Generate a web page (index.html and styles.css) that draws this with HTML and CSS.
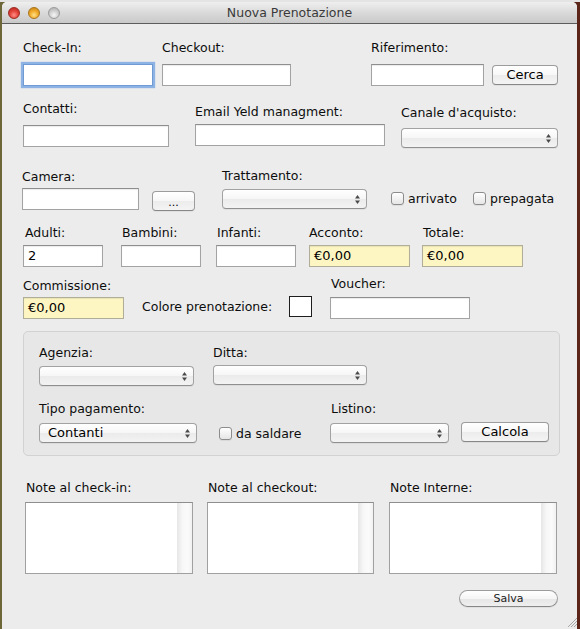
FILE: index.html
```html
<!DOCTYPE html>
<html lang="it">
<head>
<meta charset="utf-8">
<title>Nuova Prenotazione</title>
<link rel="stylesheet" href="styles.css">
</head>
<body>
<div class="window">
  <div class="titlebar">
    <div class="lights">
      <span class="light red"></span>
      <span class="light yellow"></span>
      <span class="light grey"></span>
    </div>
    <div class="title">Nuova Prenotazione</div>
    <div></div>
  </div>

  <div class="content">
    <div class="row r1">
      <div class="f f-checkin"><div class="lbl">Check-In:</div><div class="tf focus h22 mt9"></div></div>
      <div class="f f-checkout"><div class="lbl">Checkout:</div><div class="tf h22 mt9"></div></div>
      <div class="f f-rif">
        <div class="lbl">Riferimento:</div>
        <div class="inline mt9">
          <div class="tf h22 w-rif"></div>
          <div class="btn b-cerca">Cerca</div>
        </div>
      </div>
    </div>

    <div class="row r2">
      <div class="f f-contatti"><div class="lbl">Contatti:</div><div class="tf h22 mt9"></div></div>
      <div class="f f-email"><div class="lbl mt3">Email Yeld managment:</div><div class="tf h22 mt5"></div></div>
      <div class="f f-canale"><div class="lbl mt4">Canale d'acquisto:</div><div class="sel mt8"><span class="sel-text"></span><svg class="arrows" viewBox="0 0 5 9" width="5" height="9"><polygon points="2.5,0 5,3.5 0,3.5"/><polygon points="0,5.5 5,5.5 2.5,9"/></svg></div></div>
    </div>

    <div class="row r3">
      <div class="f f-camera"><div class="lbl mt1">Camera:</div><div class="tf h22 mt4"></div></div>
      <div class="btn b-dots">...</div>
      <div class="f f-tratt"><div class="lbl">Trattamento:</div><div class="sel mt6"><span class="sel-text"></span><svg class="arrows" viewBox="0 0 5 9" width="5" height="9"><polygon points="2.5,0 5,3.5 0,3.5"/><polygon points="0,5.5 5,5.5 2.5,9"/></svg></div></div>
      <div class="chk c-arrivato"><span class="box"></span><span>arrivato</span></div>
      <div class="chk c-prepagata"><span class="box"></span><span>prepagata</span></div>
    </div>

    <div class="row r4">
      <div class="f f-adulti"><div class="lbl pl2">Adulti:</div><div class="tf h22 mt5 val">2</div></div>
      <div class="f f-bambini"><div class="lbl pl1">Bambini:</div><div class="tf h22 mt5"></div></div>
      <div class="f f-infanti"><div class="lbl pl1">Infanti:</div><div class="tf h22 mt5"></div></div>
      <div class="f f-acconto"><div class="lbl">Acconto:</div><div class="tf yellow h22 mt5 val">€0,00</div></div>
      <div class="f f-totale"><div class="lbl pl1">Totale:</div><div class="tf yellow h22 mt5 val">€0,00</div></div>
    </div>

    <div class="row r5">
      <div class="f f-comm"><div class="lbl mt2">Commissione:</div><div class="tf yellow h22 mt4 val">€0,00</div></div>
      <div class="colore"><span class="colore-text">Colore prenotazione:</span><span class="swatch"></span></div>
      <div class="f f-voucher"><div class="lbl pl1">Voucher:</div><div class="tf h22 mt6"></div></div>
    </div>

    <div class="group">
      <div class="row g1">
        <div class="f f-agenzia"><div class="lbl">Agenzia:</div><div class="sel mt6"><span class="sel-text"></span><svg class="arrows" viewBox="0 0 5 9" width="5" height="9"><polygon points="2.5,0 5,3.5 0,3.5"/><polygon points="0,5.5 5,5.5 2.5,9"/></svg></div></div>
        <div class="f f-ditta"><div class="lbl">Ditta:</div><div class="sel mt5"><span class="sel-text"></span><svg class="arrows" viewBox="0 0 5 9" width="5" height="9"><polygon points="2.5,0 5,3.5 0,3.5"/><polygon points="0,5.5 5,5.5 2.5,9"/></svg></div></div>
      </div>
      <div class="row g2">
        <div class="f f-tipo"><div class="lbl">Tipo pagamento:</div><div class="sel mt7"><span class="sel-text">Contanti</span><svg class="arrows" viewBox="0 0 5 9" width="5" height="9"><polygon points="2.5,0 5,3.5 0,3.5"/><polygon points="0,5.5 5,5.5 2.5,9"/></svg></div></div>
        <div class="chk c-saldare"><span class="box"></span><span>da saldare</span></div>
        <div class="f f-listino"><div class="lbl pl1">Listino:</div><div class="sel mt7"><span class="sel-text"></span><svg class="arrows" viewBox="0 0 5 9" width="5" height="9"><polygon points="2.5,0 5,3.5 0,3.5"/><polygon points="0,5.5 5,5.5 2.5,9"/></svg></div></div>
        <div class="btn b-calcola">Calcola</div>
      </div>
    </div>

    <div class="row notes">
      <div class="f f-n1"><div class="lbl pl1">Note al check-in:</div><div class="ta mt7"><div class="scroll"></div></div></div>
      <div class="f f-n2"><div class="lbl pl1">Note al checkout:</div><div class="ta mt7"><div class="scroll"></div></div></div>
      <div class="f f-n3"><div class="lbl pl1">Note Interne:</div><div class="ta mt7"><div class="scroll"></div></div></div>
    </div>

    <div class="row footer">
      <div class="btn b-salva">Salva</div>
    </div>
  </div>

  <svg class="grip" viewBox="0 0 12 12" width="12" height="12">
    <line x1="3" y1="12" x2="12" y2="3" stroke="#a8a8a8" stroke-width="1"/>
    <line x1="6" y1="12" x2="12" y2="6" stroke="#a8a8a8" stroke-width="1"/>
    <line x1="9" y1="12" x2="12" y2="9" stroke="#a8a8a8" stroke-width="1"/>
  </svg>
</div>
</body>
</html>
```

FILE: styles.css
```css
html, body {
  margin: 0;
  padding: 0;
}
body {
  width: 580px;
  height: 629px;
  overflow: hidden;
  background:
    linear-gradient(#e4e4e4, #e4e4e4) top left / 100% 2px no-repeat,
    linear-gradient(to right, #6c6638 0, #6c6638 50%, #5b2519 50%, #5b2519 100%);
  font-family: "DejaVu Sans", "Liberation Sans", sans-serif;
  font-size: 12.5px;
  color: #0d0d0d;
}

.window {
  margin: 2px 0 0 2px;
  width: 575px;
  height: 627px;
  background: #ececec;
  position: relative;
  border-radius: 5px 5px 0 0;
  overflow: hidden;
}

.titlebar {
  height: 21px;
  border-bottom: 1px solid #5c5c5c;
  background: linear-gradient(#efefef, #dadada 50%, #c9c9c9);
  display: grid;
  grid-template-columns: 1fr auto 1fr;
  align-items: center;
}
.lights {
  display: flex;
  gap: 8px;
  padding-left: 6px;
}
.light {
  width: 12px;
  height: 12px;
  border-radius: 50%;
  box-sizing: border-box;
}
.light.red {
  background: radial-gradient(circle at 50% 70%, #ff8f86 0, #e5463c 45%, #b0201a 100%);
  border: 1px solid #9c2a22;
}
.light.yellow {
  background: radial-gradient(circle at 50% 70%, #ffe08a 0, #f2ad2c 45%, #c27d10 100%);
  border: 1px solid #a8741a;
}
.light.grey {
  background: radial-gradient(circle at 50% 70%, #f6f6f6 0, #d2d2d2 45%, #a9a9a9 100%);
  border: 1px solid #9a9a9a;
}
.title {
  color: #3a3a3a;
  font-size: 12.5px;
  line-height: 21px;
}

.row {
  display: flex;
  align-items: flex-start;
}
.f {
  display: flex;
  flex-direction: column;
  flex: none;
}
.lbl {
  height: 16px;
  line-height: 17px;
  white-space: nowrap;
}
.inline {
  display: flex;
  align-items: flex-start;
}

.mt1 { margin-top: 1px; }
.mt2 { margin-top: 2px; }
.mt3 { margin-top: 3px; }
.mt4 { margin-top: 4px; }
.mt5 { margin-top: 5px; }
.mt6 { margin-top: 6px; }
.mt7 { margin-top: 7px; }
.mt8 { margin-top: 8px; }
.mt9 { margin-top: 9px; }
.pl1 { padding-left: 1px; }
.pl2 { padding-left: 2px; }

/* text fields */
.tf {
  box-sizing: border-box;
  background: #fff;
  border: 1px solid #a3a3a3;
  border-top-color: #8e8e8e;
  box-shadow: inset 0 1px 1px rgba(0,0,0,0.08);
  width: 100%;
}
.h22 { height: 22px; }
.tf.val {
  padding-left: 4px;
  line-height: 20px;
  font-size: 13px;
  color: #000;
}
.tf.yellow {
  background: #fdf6c3;
  border-color: #b0ad98;
}
.tf.focus {
  border-color: #6f9ad4;
  box-shadow: 0 0 1px 2px rgba(110,160,225,0.75);
}

/* popup buttons */
.sel {
  box-sizing: border-box;
  height: 20px;
  width: 100%;
  border: 1px solid #a2a2a2;
  border-bottom-color: #8f8f8f;
  border-radius: 4px;
  background: linear-gradient(#ffffff, #f6f6f6 50%, #ebebeb 51%, #f3f3f3);
  box-shadow: 0 1px 0 rgba(0,0,0,0.05);
  display: flex;
  align-items: center;
  justify-content: space-between;
  padding: 0 6px 0 8px;
}
.sel-text {
  font-size: 13px;
  color: #000;
  line-height: 18px;
}
.arrows {
  fill: #4a4a4a;
}

/* push buttons */
.btn {
  box-sizing: border-box;
  flex: none;
  height: 20px;
  border: 1px solid #9c9c9c;
  border-bottom-color: #878787;
  border-radius: 4px;
  background: linear-gradient(#ffffff, #f7f7f7 50%, #ececec 51%, #f4f4f4);
  box-shadow: 0 1px 0 rgba(0,0,0,0.05);
  display: flex;
  align-items: center;
  justify-content: center;
  font-size: 13px;
  color: #000;
  line-height: 18px;
}

/* checkboxes */
.chk {
  flex: none;
  display: flex;
  align-items: center;
  gap: 4px;
  height: 16px;
  white-space: nowrap;
  font-size: 12.5px;
}
.box {
  width: 13px;
  height: 13px;
  box-sizing: border-box;
  border: 1px solid #8c8c8c;
  border-radius: 3px;
  background: linear-gradient(#ffffff, #f2f2f2 50%, #e6e6e6);
  box-shadow: 0 1px 0 rgba(0,0,0,0.06);
}

/* row 1 */
.r1 { margin-top: 15px; }
.f-checkin { margin-left: 21px; width: 130px; }
.f-checkout { margin-left: 9px; width: 129px; }
.f-rif { margin-left: 80px; }
.w-rif { width: 113px; }
.b-cerca { margin-left: 8px; margin-top: 1px; width: 66px; }

/* row 2 */
.r2 { margin-top: 14px; }
.f-contatti { margin-left: 21px; width: 146px; }
.f-email { margin-left: 26px; width: 190px; }
.f-canale { margin-left: 16px; width: 157px; }

/* row 3 */
.r3 { margin-top: 19px; }
.f-camera { margin-left: 20px; width: 117px; }
.b-dots { margin-left: 13px; margin-top: 24px; width: 43px; font-size: 11px; padding-top: 3px; }
.f-tratt { margin-left: 27px; width: 145px; }
.c-arrivato { margin-left: 24px; margin-top: 23px; width: 82px; }
.c-prepagata { margin-top: 23px; }

/* row 4 */
.r4 { margin-top: 13px; }
.f-adulti { margin-left: 21px; width: 80px; }
.f-bambini { margin-left: 18px; width: 80px; }
.f-infanti { margin-left: 15px; width: 80px; }
.f-acconto { margin-left: 13px; width: 101px; }
.f-totale { margin-left: 12px; width: 101px; }

/* row 5 */
.r5 { margin-top: 8px; }
.f-comm { margin-left: 21px; width: 101px; }
.colore {
  flex: none;
  margin-left: 18px;
  margin-top: 21px;
  display: flex;
  align-items: center;
  font-size: 12.5px;
}
.colore-text {
  width: 133px;
  white-space: nowrap;
}
.swatch {
  margin-left: 14px;
  width: 23px;
  height: 21px;
  box-sizing: border-box;
  border: 1px solid #1e1e1e;
  background: #fff;
}
.f-voucher { margin-left: 18px; width: 140px; }

/* group box */
.group {
  box-sizing: border-box;
  margin: 12px 0 0 21px;
  width: 537px;
  height: 125px;
  border: 1px solid #d2d2d2;
  border-radius: 5px;
  background: #e7e7e7;
  padding-top: 12px;
}
.f-agenzia { margin-left: 15px; width: 155px; }
.f-ditta { margin-left: 19px; width: 154px; }
.g2 { margin-top: 14px; }
.f-tipo { margin-left: 15px; width: 158px; }
.c-saldare { margin-left: 22px; margin-top: 25px; width: 111px; }
.f-listino { width: 119px; }
.b-calcola { margin-left: 12px; margin-top: 22px; width: 88px; }

/* notes */
.notes { margin-top: 23px; }
.f-n1 { margin-left: 23px; width: 168px; }
.f-n2 { margin-left: 14px; width: 167px; }
.f-n3 { margin-left: 15px; width: 168px; }
.ta {
  box-sizing: border-box;
  height: 72px;
  border: 1px solid #a0a0a0;
  border-top-color: #8e8e8e;
  background: #fff;
  display: flex;
  justify-content: flex-end;
}
.scroll {
  width: 15px;
  height: 100%;
  background: linear-gradient(to right, #e6e6e6, #f7f7f7 35%, #fbfbfb 70%, #f1f1f1);
}

/* footer */
.footer { margin-top: 16px; }
.b-salva {
  margin-left: 457px;
  width: 99px;
  height: 17px;
  border-radius: 9px;
  font-size: 11px;
  line-height: 15px;
  color: #222;
  background: linear-gradient(#ffffff, #f5f5f5 50%, #e6e6e6 51%, #efefef);
}

.grip {
  position: absolute;
  right: 0;
  bottom: 2px;
}
```
